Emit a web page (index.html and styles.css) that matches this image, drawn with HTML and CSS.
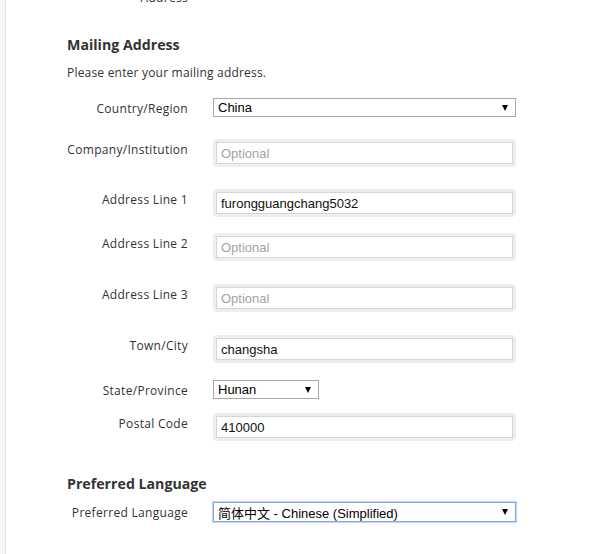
FILE: index.html
```html
<!DOCTYPE html>
<html lang="en">
<head>
<meta charset="utf-8">
<title>Mailing Address</title>
<link rel="stylesheet" href="styles.css">
</head>
<body>
<div class="page">
  <div class="form">
    <div class="row row-prev"><span class="lbl">Address</span></div>

    <h2 class="heading heading-mail">Mailing Address</h2>
    <p class="intro">Please enter your mailing address.</p>

    <div class="row row-country">
      <label class="lbl">Country/Region</label>
      <div class="select select-wide"><span class="select-text">China</span><span class="arrow"></span></div>
    </div>

    <div class="row row-company">
      <label class="lbl">Company/Institution</label>
      <div class="field"><input class="input" type="text" placeholder="Optional"></div>
    </div>

    <div class="row row-al1">
      <label class="lbl">Address Line 1</label>
      <div class="field"><input class="input" type="text" value="furongguangchang5032"></div>
    </div>

    <div class="row row-al2">
      <label class="lbl">Address Line 2</label>
      <div class="field"><input class="input" type="text" placeholder="Optional"></div>
    </div>

    <div class="row row-al3">
      <label class="lbl">Address Line 3</label>
      <div class="field"><input class="input" type="text" placeholder="Optional"></div>
    </div>

    <div class="row row-town">
      <label class="lbl">Town/City</label>
      <div class="field"><input class="input" type="text" value="changsha"></div>
    </div>

    <div class="row row-state">
      <label class="lbl">State/Province</label>
      <div class="select select-narrow"><span class="select-text">Hunan</span><span class="arrow"></span></div>
    </div>

    <div class="row row-postal">
      <label class="lbl">Postal Code</label>
      <div class="field"><input class="input" type="text" value="410000"></div>
    </div>

    <h2 class="heading heading-lang">Preferred Language</h2>

    <div class="row row-lang">
      <label class="lbl">Preferred Language</label>
      <div class="select select-wide select-focus"><span class="select-text">简体中文 - Chinese (Simplified)</span><span class="arrow"></span></div>
    </div>
  </div>
</div>
</body>
</html>
```

FILE: styles.css
```css
html, body {
  margin: 0;
  padding: 0;
  height: 100%;
  overflow: hidden;
}

body {
  background: #f7f7f7;
  font-family: "Open Sans", "Noto Sans", sans-serif;
  color: #333;
}

.page {
  display: flow-root;
  margin-left: 5px;
  border-left: 1px solid #e4e4e4;
  background: #ffffff;
  height: 100%;
}

.form {
  padding-left: 61px;
}

.row {
  display: flex;
  align-items: flex-start;
  gap: 25px;
}

.lbl {
  width: 121px;
  flex: 0 0 121px;
  text-align: right;
  font-size: 12px;
  line-height: 16px;
  letter-spacing: 0.3px;
  padding-top: 3px;
  color: #333;
  white-space: nowrap;
}

.row-prev {
  margin-top: -13px;
}

.heading {
  margin: 0;
  font-size: 14.2px;
  line-height: 20px;
  font-weight: bold;
  color: #333;
}

.heading-mail {
  margin-top: 29px;
}

.intro {
  margin: 10px 0 0;
  font-size: 12px;
  line-height: 16px;
  letter-spacing: 0.2px;
}

.row-country { margin-top: 17px; }
.row-company { margin-top: 22px; }
.row-al1 { margin-top: 22px; }
.row-al2 { margin-top: 16px; }
.row-al3 { margin-top: 23px; }
.row-town { margin-top: 23px; }
.row-state { margin-top: 17px; }
.row-postal { margin-top: 14px; }
.heading-lang { margin-top: 33px; }
.row-lang { margin-top: 8px; }

.field {
  width: 303px;
  box-sizing: border-box;
  padding: 3px;
  background: #eeeeee;
  border-radius: 4px;
}

.input {
  display: block;
  width: 100%;
  height: 22px;
  box-sizing: border-box;
  margin: 0;
  border: 1px solid #d6d6d6;
  padding: 0 4px;
  font-family: "Liberation Sans", Arial, sans-serif;
  font-size: 13px;
  color: #111;
  background: #fff;
  outline: none;
}

.input::placeholder {
  color: #a3a3a3;
}

.select {
  display: flex;
  align-items: center;
  justify-content: space-between;
  box-sizing: border-box;
  height: 19px;
  border: 1px solid #a9a9a9;
  background: #fff;
  padding: 0 7px 0 4px;
  font-family: "Liberation Sans", "Noto Sans CJK SC", Arial, sans-serif;
  font-size: 13px;
  color: #000;
}

.select-wide { width: 303px; }
.select-narrow { width: 106px; }

.select-focus {
  height: 20px;
  border-color: #7ea7e6;
  box-shadow: 0 0 1px 1px #c6d9f5;
}

.select-text {
  white-space: nowrap;
}

.arrow {
  width: 0;
  height: 0;
  border-left: 3.5px solid transparent;
  border-right: 3.5px solid transparent;
  border-top: 6px solid #000;
}
```
